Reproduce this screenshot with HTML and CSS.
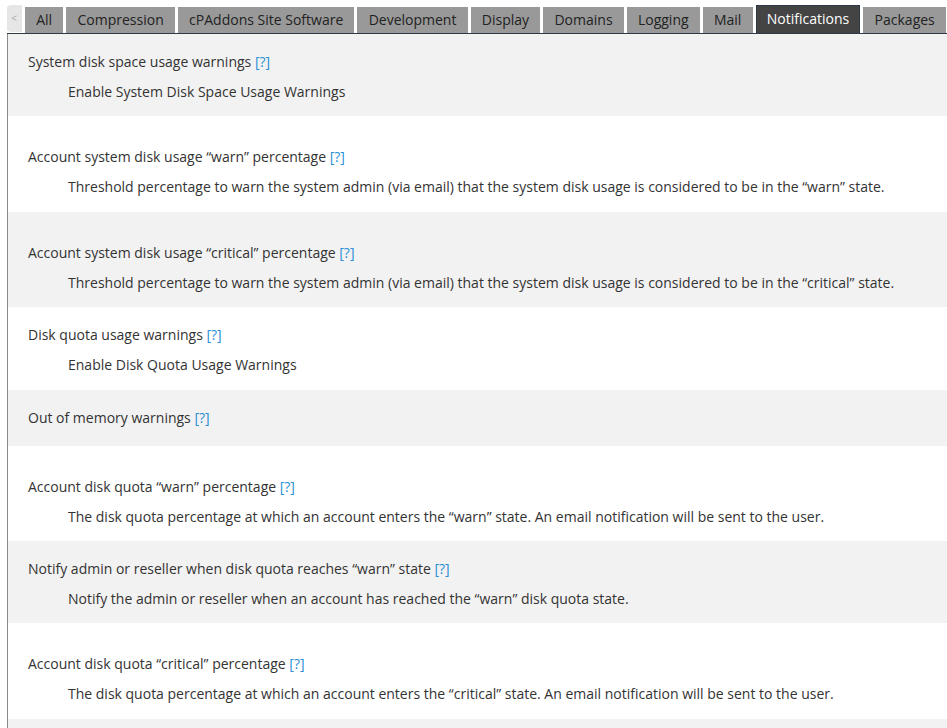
FILE: index.html
```html
<!DOCTYPE html>
<html>
<head>
<meta charset="utf-8">
<link rel="stylesheet" href="styles.css">
</head>
<body>
<div class="page">
  <div class="tabstrip">
    <div class="scroll-btn">&lt;</div>
    <div class="tab">All</div>
    <div class="tab">Compression</div>
    <div class="tab">cPAddons Site Software</div>
    <div class="tab">Development</div>
    <div class="tab">Display</div>
    <div class="tab">Domains</div>
    <div class="tab">Logging</div>
    <div class="tab">Mail</div>
    <div class="tab active">Notifications</div>
    <div class="tab">Packages</div>
  </div>
  <div class="content">
    <div class="row gray">
      <div class="title">System disk space usage warnings <a class="help">[?]</a></div>
      <div class="desc">Enable System Disk Space Usage Warnings</div>
    </div>
    <div class="row tall">
      <div class="title">Account system disk usage “warn” percentage <a class="help">[?]</a></div>
      <div class="desc">Threshold percentage to warn the system admin (via email) that the system disk usage is considered to be in the “warn” state.</div>
    </div>
    <div class="row gray tall">
      <div class="title">Account system disk usage “critical” percentage <a class="help">[?]</a></div>
      <div class="desc">Threshold percentage to warn the system admin (via email) that the system disk usage is considered to be in the “critical” state.</div>
    </div>
    <div class="row">
      <div class="title">Disk quota usage warnings <a class="help">[?]</a></div>
      <div class="desc">Enable Disk Quota Usage Warnings</div>
    </div>
    <div class="row gray single">
      <div class="title">Out of memory warnings <a class="help">[?]</a></div>
    </div>
    <div class="row tall">
      <div class="title">Account disk quota “warn” percentage <a class="help">[?]</a></div>
      <div class="desc">The disk quota percentage at which an account enters the “warn” state. An email notification will be sent to the user.</div>
    </div>
    <div class="row gray">
      <div class="title">Notify admin or reseller when disk quota reaches “warn” state <a class="help">[?]</a></div>
      <div class="desc">Notify the admin or reseller when an account has reached the “warn” disk quota state.</div>
    </div>
    <div class="row tall">
      <div class="title">Account disk quota “critical” percentage <a class="help">[?]</a></div>
      <div class="desc">The disk quota percentage at which an account enters the “critical” state. An email notification will be sent to the user.</div>
    </div>
    <div class="row gray">
      <div class="title">Notify admin or reseller when disk quota reaches “critical” state <a class="help">[?]</a></div>
      <div class="desc">Notify the admin or reseller when an account has reached the “critical” disk quota state.</div>
    </div>
  </div>
</div>
</body>
</html>
```

FILE: styles.css
```css
html, body {
  margin: 0;
  padding: 0;
  background: #fff;
  overflow: hidden;
}
body {
  font-family: "Open Sans", "Noto Sans", sans-serif;
  font-size: 14px;
  color: #333;
}
.page {
  padding-left: 7px;
}
.tabstrip {
  display: flex;
  align-items: flex-end;
  height: 33px;
  border-bottom: 1px solid #2e3a4b;
  white-space: nowrap;
  overflow: hidden;
}
.scroll-btn {
  width: 16px;
  height: 27px;
  margin-left: -1px;
  margin-bottom: 1px;
  margin-right: 3px;
  background: #e6e6e6;
  border-radius: 5px 0 0 5px;
  color: #a8a8a8;
  font-size: 10px;
  line-height: 26px;
  text-align: center;
  flex: none;
}
.tab {
  height: 26px;
  line-height: 26px;
  padding: 0 11.2px;
  margin-right: 3px;
  background: #999;
  color: #222;
  flex: none;
}
.tab.active {
  height: 27px;
  line-height: 26px;
  padding: 0 10.2px;
  background: #444;
  color: #fff;
  border: 1px solid #2e3a4b;
  border-bottom: none;
}
.content {
  border-left: 1px solid #8a8a8a;
}
.row {
  padding: 18px 0 14.4px 20px;
  background: #fff;
}
.row.gray {
  background: #f2f2f2;
}
.row.tall {
  padding-top: 31px;
}
.row.single {
  padding-bottom: 18px;
}
.title {
  line-height: 20px;
}
.desc {
  line-height: 20px;
  margin-top: 10px;
  padding-left: 40px;
}
.help {
  color: #2a8fd6;
}
```
